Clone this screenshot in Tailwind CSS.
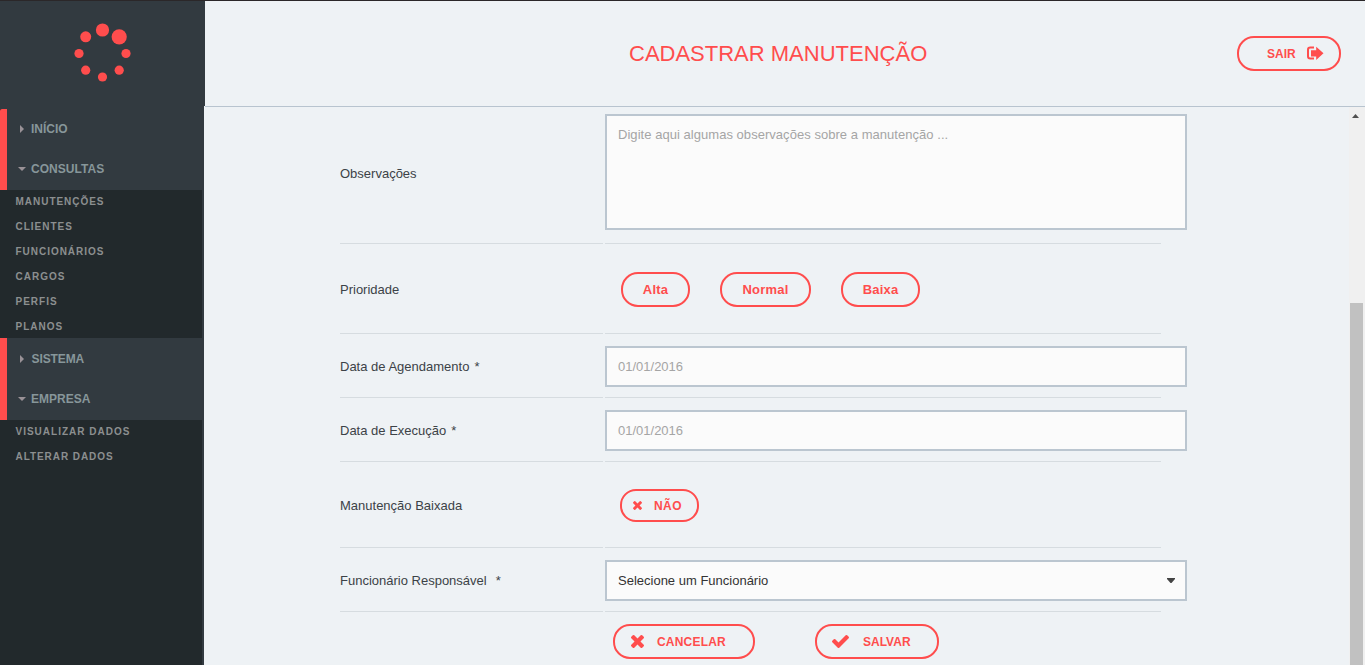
<!DOCTYPE html>
<html lang="pt-BR">
<head>
<meta charset="utf-8">
<title>Cadastrar Manutenção</title>
<script src="https://cdn.jsdelivr.net/npm/@tailwindcss/browser@4"></script>
</head>
<body class="flex h-[665px] w-[1365px] flex-col overflow-hidden bg-[#eef2f5] font-['Liberation_Sans',Arial,sans-serif] text-[13px] text-[#3c4247]">
<div class="h-px shrink-0 bg-[#2b2729]"></div>
<div class="flex min-h-0 flex-1">
  <aside class="flex w-[205px] shrink-0 flex-col">
    <div class="h-[105px] shrink-0 bg-[#323a40]">
      <svg class="h-[105px] w-[205px] fill-[#ff4d4d]" viewBox="0 1 205 105">
        <circle cx="102.5" cy="30" r="6.6"/><circle cx="119.2" cy="36.8" r="7.6"/><circle cx="126" cy="53.5" r="4.6"/><circle cx="119.2" cy="70.2" r="4.6"/><circle cx="102.5" cy="77" r="4.6"/><circle cx="85.7" cy="70.2" r="4.6"/><circle cx="79" cy="53.5" r="4.6"/><circle cx="85.7" cy="36.8" r="5.5"/>
      </svg>
    </div>
    <nav class="flex w-[204px] flex-1 flex-col border-r-2 border-[#323a40] bg-[#22292c] font-bold">
      <div class="h-[3px] bg-[#323a40]"></div>
      <div class="h-[81px] rounded-tl-[2px] border-l-[7px] border-[#ff4d4d] bg-[#323a40] text-xs text-[#87969a]">
        <a class="flex h-10 items-center"><svg class="ml-[13px] mr-[7px] h-2 w-1 fill-[#9a9297]" viewBox="0 0 4 8"><path d="M0 0L4 4L0 8z"/></svg><span>INÍCIO</span></a>
        <a class="flex h-10 items-center"><svg class="ml-[11px] mr-[5px] h-1 w-2 fill-[#9a9297]" viewBox="0 0 8 4"><path d="M0 0h8L4 4z"/></svg><span class="tracking-[0.05px]">CONSULTAS</span></a>
      </div>
      <div class="flex h-[148px] flex-col pl-[15.5px] text-[10px] text-[#8c8f90]">
        <a class="h-[25px] leading-[24px] tracking-[0.97px]">MANUTENÇÕES</a>
        <a class="h-[25px] leading-[24px] tracking-[1px]">CLIENTES</a>
        <a class="h-[25px] leading-[24px] tracking-[0.97px]">FUNCIONÁRIOS</a>
        <a class="h-[25px] leading-[24px] tracking-[1px]">CARGOS</a>
        <a class="h-[25px] leading-[24px] tracking-[1px]">PERFIS</a>
        <a class="h-[23px] leading-[24px] tracking-[1px]">PLANOS</a>
      </div>
      <div class="h-[82px] border-l-[7px] border-[#ff4d4d] bg-[#323a40] pt-px text-xs text-[#87969a]">
        <a class="flex h-10 items-center"><svg class="ml-[13px] mr-[7.5px] h-2 w-1 fill-[#9a9297]" viewBox="0 0 4 8"><path d="M0 0L4 4L0 8z"/></svg><span class="tracking-[-0.1px]">SISTEMA</span></a>
        <a class="flex h-10 items-center"><svg class="ml-[11px] mr-[5px] h-1 w-2 fill-[#9a9297]" viewBox="0 0 8 4"><path d="M0 0h8L4 4z"/></svg><span>EMPRESA</span></a>
      </div>
      <div class="flex flex-col pl-[15.5px] text-[10px] text-[#8c8f90]">
        <a class="h-[25px] leading-[24px] tracking-[1px]">VISUALIZAR DADOS</a>
        <a class="h-[25px] leading-[24px] tracking-[0.93px]">ALTERAR DADOS</a>
      </div>
    </nav>
  </aside>
  <div class="-ml-px flex min-w-0 flex-1 flex-col">
    <header class="ml-px flex h-[106px] shrink-0 items-center border-b border-[#b8c4cf] pr-6 text-[#ff4d4d]">
      <h1 class="ml-[424px] w-[608px] text-[22px]">CADASTRAR MANUTENÇÃO</h1>
      <a class="flex h-[35px] w-[104px] items-center rounded-[17px] border-2 border-[#ff4d4d] pl-7 text-xs font-bold"><span class="w-10">SAIR</span>
        <svg class="h-[15px] w-[17px]" viewBox="0 0 17 15"><path d="M7 1.500H3.300Q1 1.500 1 3.800v6.400q0 2.300 2.300 2.300H7" fill="none" stroke="currentColor" stroke-width="2"/><path d="M4 4.300h5.200V0.800L16.500 7.300L9.200 13.900V10.400H4z" fill="currentColor"/></svg>
      </a>
    </header>
    <div class="flex min-h-0 flex-1">
      <main class="ml-[136px] w-[1009px] shrink-0">
        <div class="flex h-[137px] gap-0.5">
          <div class="flex w-[263px] items-center border-b border-[#d6dce0] pb-[3px]">Observações</div>
          <div class="w-[556px] border-b border-[#d6dce0] pt-[7px]"><div class="h-[116px] w-[582px] border-2 border-[#bbc6d0] bg-[#fbfbfb] px-[11px] py-[9px] leading-[19px] tracking-[0.04px] text-[#a5a5a5]">Digite aqui algumas observações sobre a manutenção ...</div></div>
        </div>
        <div class="flex h-[90px] gap-0.5">
          <div class="flex w-[263px] items-center border-b border-[#d6dce0] pt-0.5">Prioridade</div>
          <div class="flex w-[556px] items-center gap-[30px] border-b border-[#d6dce0] pl-4 pt-0.5 font-bold tracking-[0.2px] text-[#ff4d4d]">
            <a class="flex h-[35px] w-[69px] items-center justify-center rounded-[17px] border-2 border-[#ff4d4d]">Alta</a>
            <a class="flex h-[35px] w-[91px] items-center justify-center rounded-[17px] border-2 border-[#ff4d4d]">Normal</a>
            <a class="flex h-[35px] w-[79px] items-center justify-center rounded-[17px] border-2 border-[#ff4d4d]">Baixa</a>
          </div>
        </div>
        <div class="flex h-16 gap-0.5">
          <div class="flex w-[263px] items-center border-b border-[#d6dce0] pt-0.5">Data de Agendamento<span class="ml-[5px]">*</span></div>
          <div class="w-[556px] border-b border-[#d6dce0] pt-3"><div class="flex h-[41px] w-[582px] items-center border-2 border-[#bbc6d0] bg-[#fbfbfb] px-[11px] text-[#a5a5a5]">01/01/2016</div></div>
        </div>
        <div class="flex h-16 gap-0.5">
          <div class="flex w-[263px] items-center border-b border-[#d6dce0] pt-0.5">Data de Execução<span class="ml-[5px]">*</span></div>
          <div class="w-[556px] border-b border-[#d6dce0] pt-3"><div class="flex h-[41px] w-[582px] items-center border-2 border-[#bbc6d0] bg-[#fbfbfb] px-[11px] text-[#a5a5a5]">01/01/2016</div></div>
        </div>
        <div class="flex h-[86px] gap-0.5">
          <div class="flex w-[263px] items-center border-b border-[#d6dce0] pt-0.5">Manutenção Baixada</div>
          <div class="flex w-[556px] items-center border-b border-[#d6dce0] pl-[15px] pt-0.5 text-[#ff4d4d]">
            <a class="flex h-[33px] w-[79px] items-center rounded-[16px] border-2 border-[#ff4d4d] pl-[11px] text-xs font-bold tracking-[0.4px]"><svg class="mr-3 size-[9px] fill-current" viewBox="302 366 1188 1188"><path d="M1490 1322q0 40-28 68l-136 136q-28 28-68 28t-68-28l-294-294-294 294q-28 28-68 28t-68-28l-136-136q-28-28-28-68t28-68l294-294-294-294q-28-28-28-68t28-68l136-136q28-28 68-28t68 28l294 294 294-294q28-28 68-28t68 28l136 136q28 28 28 68t-28 68l-294 294 294 294q28 28 28 68z"/></svg>NÃO</a>
          </div>
        </div>
        <div class="flex h-16 gap-0.5">
          <div class="flex w-[263px] items-center border-b border-[#d6dce0] pt-0.5">Funcionário Responsável<span class="ml-[9px]">*</span></div>
          <div class="w-[556px] border-b border-[#d6dce0] pt-3"><div class="flex h-[41px] w-[582px] items-center justify-between border-2 border-[#bbc6d0] bg-[#fbfbfb] pl-[11px] pr-2.5 text-[#333]">Selecione um Funcionário<svg class="h-[5px] w-2 fill-[#444]" viewBox="0 0 8 5"><path d="M0 0h8v1L4.500 5h-1L0 1z"/></svg></div></div>
        </div>
        <div class="flex gap-[60px] pl-[273px] pt-3 text-xs font-bold text-[#ff4d4d]">
          <a class="flex h-[35px] w-[142px] items-center rounded-[17px] border-2 border-[#ff4d4d] pl-4 tracking-[0.2px]"><svg class="mr-[13px] size-[13px] fill-current" viewBox="302 366 1188 1188"><path d="M1490 1322q0 40-28 68l-136 136q-28 28-68 28t-68-28l-294-294-294 294q-28 28-68 28t-68-28l-136-136q-28-28-28-68t28-68l294-294-294-294q-28-28-28-68t28-68l136-136q28-28 68-28t68 28l294 294 294-294q28-28 68-28t68 28l136 136q28 28 28 68t-28 68l-294 294 294 294q28 28 28 68z"/></svg>CANCELAR</a>
          <a class="flex h-[35px] w-[124px] items-center rounded-[17px] border-2 border-[#ff4d4d] pl-[15px]"><svg class="mr-3.5 h-[13px] w-[17px] fill-current" viewBox="121 334 1550 1188"><path d="M1671 566q0 40-28 68l-724 724-136 136q-28 28-68 28t-68-28l-136-136-362-362q-28-28-28-68t28-68l136-136q28-28 68-28t68 28l294 295 656-657q28-28 68-28t68 28l136 136q28 28 28 68z"/></svg>SALVAR</a>
        </div>
      </main>
      <div class="flex w-4 flex-col items-center bg-[#f0f0f0] pr-[3px]">
        <svg class="mt-[7px] h-1 w-[7px] shrink-0 fill-[#505050]" viewBox="0 0 7 4"><path d="M0 4L3.500 0L7 4z"/></svg>
        <div class="ml-px mt-[185px] w-[13px] flex-1 bg-[#c1c1c1]"></div>
      </div>
    </div>
  </div>
</div>
</body>
</html>
